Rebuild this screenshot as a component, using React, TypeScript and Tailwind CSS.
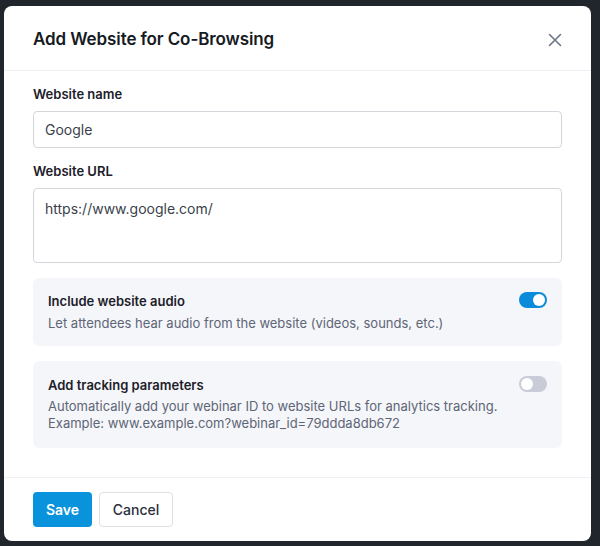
import { useState } from 'react';

function Toggle({ on, onChange }: { on: boolean; onChange: () => void }) {
  return (
    <button
      onClick={onChange}
      className={`relative mt-[1px] h-[16px] w-[28px] shrink-0 rounded-full ${on ? 'bg-[#0b8bd9]' : 'bg-[#c9ccd6]'}`}
    >
      <span
        className={`absolute top-[2px] h-[12px] w-[12px] rounded-full bg-white ${on ? 'left-[14px]' : 'left-[2px]'}`}
      />
    </button>
  );
}

export default function App() {
  const [audio, setAudio] = useState(true);
  const [tracking, setTracking] = useState(false);

  return (
    <div
      className="h-[546px] w-[600px] bg-[#21252c] pl-[4px] pt-[6px]"
      style={{ fontFamily: 'Inter, "Noto Sans", sans-serif' }}
    >
      <div className="h-[535px] w-[587px] rounded-lg bg-white">
        {/* Header */}
        <div className="flex h-[65px] items-center justify-between border-b border-[#eef0f3] pl-[29px] pr-[28px] pt-[3px]">
          <h2 className="text-[17px] font-semibold tracking-[-0.1px] text-[#161a22]">Add Website for Co-Browsing</h2>
          <button className="text-[#6b7389]">
            <svg width="16" height="16" viewBox="0 0 16 16" fill="none" stroke="currentColor" strokeWidth="1.6" strokeLinecap="round">
              <path d="M2.5 2.5l11 11M13.5 2.5l-11 11" />
            </svg>
          </button>
        </div>

        {/* Body */}
        <div className="px-[29px] pb-[29px] pt-[13px]">
          <label className="block text-[13px] font-semibold leading-5 text-[#1c2029]">Website name</label>
          <input
            defaultValue="Google"
            className="mt-[7px] h-[37px] w-full rounded-[4px] border border-[#d4d6dc] px-[11px] text-[14px] text-[#3a3f4b] outline-none"
          />

          <label className="mt-[13px] block text-[13px] font-semibold leading-5 text-[#1c2029]">Website URL</label>
          <textarea
            defaultValue="https://www.google.com/"
            className="mt-[7px] block h-[75px] w-full resize-none rounded-[4px] border border-[#d4d6dc] px-[11px] py-[10px] text-[14px] leading-5 text-[#3a3f4b] outline-none"
          />

          <div className="mt-[15px] flex items-start justify-between rounded-md bg-[#f5f6f9] pb-[14px] pl-[15px] pr-[15px] pt-[13px]">
            <div>
              <div className="text-[13px] font-semibold leading-5 text-[#1c2029]">Include website audio</div>
              <div className="mt-[3px] text-[13px] leading-[18px] text-[#5d6577]">
                Let attendees hear audio from the website (videos, sounds, etc.)
              </div>
            </div>
            <Toggle on={audio} onChange={() => setAudio(!audio)} />
          </div>

          <div className="mt-[15px] flex items-start justify-between rounded-md bg-[#f5f6f9] pb-[16px] pl-[15px] pr-[15px] pt-[14px]">
            <div>
              <div className="text-[13px] font-semibold leading-5 text-[#1c2029]">Add tracking parameters</div>
              <div className="mt-[3px] text-[13px] leading-[17px] text-[#5d6577]">
                Automatically add your webinar ID to website URLs for analytics tracking.
                <br />
                Example: www.example.com?webinar_id=79ddda8db672
              </div>
            </div>
            <Toggle on={tracking} onChange={() => setTracking(!tracking)} />
          </div>
        </div>

        {/* Footer */}
        <div className="flex gap-[7px] border-t border-[#eef0f3] px-[29px] pt-[14px]">
          <button className="h-[35px] w-[59px] rounded-[4px] bg-[#0a93dd] text-[14px] font-semibold text-white">Save</button>
          <button className="h-[35px] w-[74px] rounded-[4px] border border-[#dfe1e6] text-[14px] font-medium text-[#2a2f3b]">
            Cancel
          </button>
        </div>
      </div>
    </div>
  );
}
